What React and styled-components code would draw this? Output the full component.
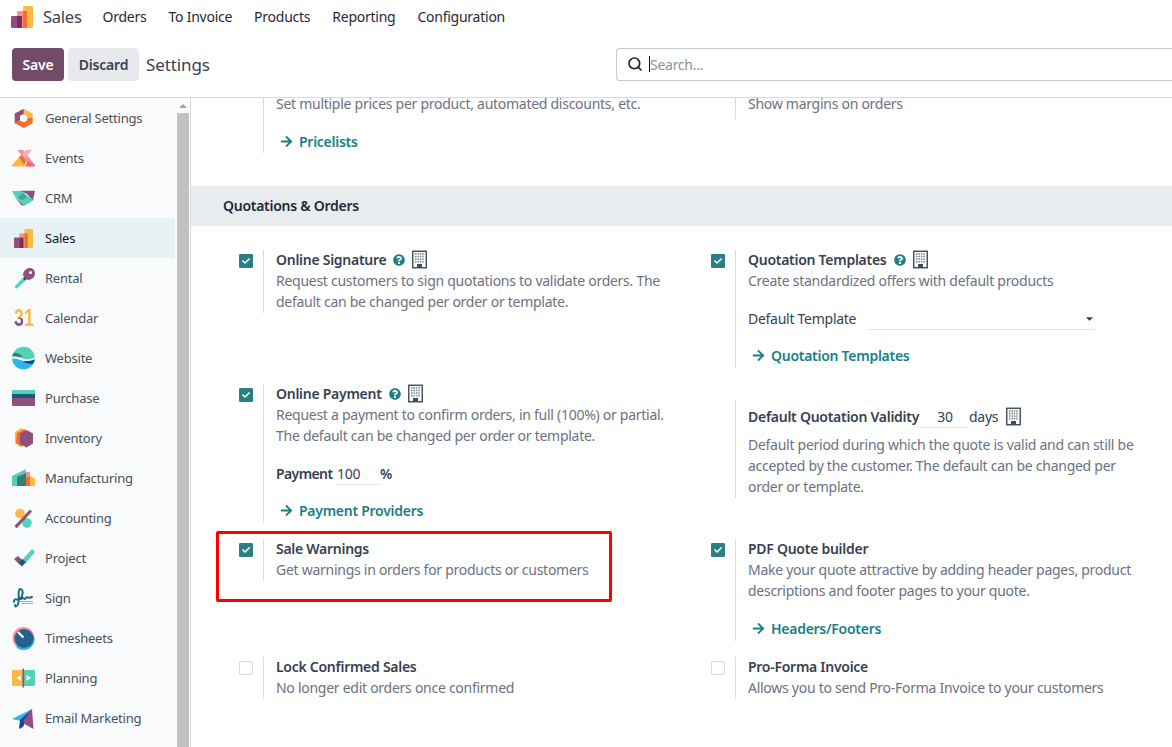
import styled, { createGlobalStyle } from "styled-components";
import { FaQuestionCircle, FaArrowRight, FaCheck, FaCaretDown } from "react-icons/fa";
import { FiSearch } from "react-icons/fi";

const GlobalStyle = createGlobalStyle`
  html, body {
    margin: 0;
    height: 100%;
    overflow: hidden;
    background: #fff;
    font-family: "Noto Sans", "Open Sans", sans-serif;
    font-size: 14px;
    line-height: 21px;
    letter-spacing: -0.27px;
    color: #374151;
  }
`;

const Page = styled.div`
  width: 1172px;
  height: 747px;
  display: flex;
  flex-direction: column;
  overflow: hidden;
`;

const NavBar = styled.nav`
  height: 34px;
  flex: none;
  box-sizing: border-box;
  display: flex;
  align-items: center;
  padding: 0 0 1px 11px;
  letter-spacing: -0.25px;
`;

const BrandLogo = styled.svg`
  width: 22px;
  height: 22px;
  flex: none;
`;

const BrandName = styled.span`
  font-size: 16.5px;
  color: #374151;
  margin-left: 10px;
  margin-right: 21px;
`;

const NavItem = styled.span`
  color: #1f2937;
  margin-right: 22px;
`;

const ControlPanel = styled.div`
  height: 64px;
  flex: none;
  display: flex;
  align-items: flex-start;
  padding: 14px 0 0 12px;
  box-sizing: border-box;
  border-bottom: 1px solid #d8dadd;
`;

const Button = styled.button`
  height: 33px;
  width: ${(p) => p.$width}px;
  margin-right: 4px;
  padding: 0 0 1px;
  border: none;
  border-radius: 4px;
  font: inherit;
  font-weight: 600;
  letter-spacing: -0.2px;
  color: ${(p) => (p.$primary ? "#fff" : "#374151")};
  background: ${(p) => (p.$primary ? "#714b67" : "#e7e9ed")};
`;

const PanelTitle = styled.span`
  font-size: 17px;
  line-height: 33px;
  letter-spacing: -0.1px;
  color: #374151;
  margin-left: 3px;
  width: 470px;
`;

const SearchBox = styled.div`
  flex: 1;
  height: 33px;
  box-sizing: border-box;
  border: 1px solid #c3ccd2;
  border-right: none;
  border-radius: 4px 0 0 4px;
  display: flex;
  align-items: center;
  padding: 0 0 1px 10px;
  color: #1f2937;
`;

const Caret = styled.span`
  width: 1px;
  height: 16px;
  background: #111;
  margin-left: 6px;
`;

const Placeholder = styled.span`
  color: #8a929c;
`;

const Body = styled.div`
  flex: 1;
  min-height: 0;
  display: flex;
`;

const Sidebar = styled.aside`
  width: 175px;
  flex: none;
  background: #f9fafb;
`;

const AppItem = styled.div`
  height: 40px;
  display: flex;
  align-items: center;
  padding-left: 12px;
  gap: 9px;
  font-size: 13px;
  letter-spacing: -0.22px;
  color: ${(p) => (p.$active ? "#111827" : "#495057")};
  background: ${(p) => (p.$active ? "#e6f2f3" : "transparent")};
`;

const ScrollTrack = styled.div`
  width: 15px;
  flex: none;
  display: flex;
  flex-direction: column;
  background: #fcfcfc;
  border-right: 1px solid #d8dadd;
`;

const ScrollArrow = styled.div`
  height: 15px;
  display: flex;
  justify-content: center;
  align-items: center;

  &::before {
    content: "";
    border-left: 4px solid transparent;
    border-right: 4px solid transparent;
    border-bottom: 4px solid #a3a3a3;
  }
`;

const ScrollThumb = styled.div`
  flex: 1;
  margin: 0 1px 0 2px;
  background: #c1c1c1;
`;

const Content = styled.main`
  flex: 1;
  min-width: 0;
  overflow: hidden;
`;

const SectionTitle = styled.h2`
  margin: 33px 0 24px;
  height: 40px;
  padding-left: 32px;
  background: #e9ecef;
  font-size: 14px;
  font-weight: 600;
  line-height: 40px;
  color: #1f2937;
`;

const Grid = styled.div`
  display: grid;
  grid-template-columns: 472px 472px;
  align-items: start;
  row-gap: 16px;
  margin-left: 36px;
`;

const Setting = styled.div`
  position: relative;
  display: grid;
  grid-template-columns: 36px 1fr;
  margin-top: ${(p) => p.$offset || 0}px;
`;

const CheckArea = styled.div`
  padding: 4px 0 0 12px;
`;

const CheckBox = styled.span`
  width: 14px;
  height: 14px;
  box-sizing: border-box;
  display: flex;
  align-items: center;
  justify-content: center;
  border-radius: 1px;
  border: 1px solid ${(p) => (p.$on ? "#2a7f83" : "#d8dadd")};
  background: ${(p) => (p.$on ? "#2a7f83" : "#fff")};
  color: #fff;
  font-size: 8px;
`;

const Pane = styled.div`
  display: flow-root;
  border-left: 1px solid #d8dadd;
  padding-left: 12px;
  padding-bottom: ${(p) => p.$bottom || 0}px;
  min-height: 21px;
`;

/* text sits a pixel higher against the divider than the line box gives */
const PaneBody = styled.div`
  margin: -1px 0 1px;
`;

const TitleRow = styled.div`
  display: flex;
  align-items: center;
  height: 21px;
`;

const Title = styled.span`
  font-weight: 600;
  color: #374151;
  white-space: nowrap;
`;

const HelpIcon = styled(FaQuestionCircle)`
  color: #1f7f85;
  font-size: 12px;
  margin-left: 7px;
`;

const Description = styled.div`
  color: #6b7280;
  white-space: nowrap;
`;

/* first row is scrolled, only the tail of its text still shows */
const ScrolledDescription = styled(Description)`
  line-height: 12px;
  padding-bottom: 5px;
`;

const FieldRow = styled.div`
  display: flex;
  align-items: center;
  height: 23px;
  margin-top: ${(p) => p.$top || 0}px;
  white-space: nowrap;
`;

const ValidityRow = styled(FieldRow)`
  margin-top: 6px;
  margin-bottom: 6px;
`;

const FieldLabel = styled.span`
  color: #374151;
  width: ${(p) => (p.$width ? `${p.$width}px` : "auto")};
  font-weight: ${(p) => (p.$bold ? 600 : 400)};
`;

const PaymentLabel = styled(FieldLabel)`
  letter-spacing: -0.6px;
`;

const Input = styled.span`
  box-sizing: border-box;
  height: 23px;
  width: ${(p) => p.$width}px;
  padding-left: ${(p) => p.$pad || 0}px;
  border-bottom: 1px solid #e2e5e9;
  display: flex;
  align-items: center;
  justify-content: ${(p) => (p.$center ? "center" : "space-between")};
  color: #374151;
`;

const SelectCaret = styled(FaCaretDown)`
  font-size: 11px;
  color: #374151;
`;

const LinkRow = styled.a`
  display: flex;
  align-items: center;
  height: 21px;
  margin-top: ${(p) => p.$top || 16}px;
  margin-left: 4px;
  gap: 6px;
  font-weight: 600;
  color: #1a7f85;
`;

const Highlight = styled.div`
  position: absolute;
  top: -8px;
  left: -11px;
  width: 396px;
  height: 71px;
  box-sizing: border-box;
  border: 3px solid #f00;
  border-radius: 2px;
  pointer-events: none;
`;

const BuildingSvg = styled.svg`
  width: 15px;
  height: 19px;
  margin-left: ${(p) => p.$left || 7}px;
  flex: none;
`;

function Building({ left }) {
  const cells = [];
  for (let r = 0; r < 4; r++) {
    for (let c = 0; c < 4; c++) {
      cells.push(<rect key={`${r}-${c}`} x={3 + c * 2.4} y={2.6 + r * 2.6} width="1.5" height="1.6" fill="#7b8794" />);
    }
  }
  return (
    <BuildingSvg $left={left} viewBox="0 0 15 18">
      <rect x="0.75" y="0.75" width="13.5" height="16.5" fill="#fff" stroke="#3f4b5b" strokeWidth="1.4" />
      {cells}
      <rect x="5" y="13.5" width="5" height="3.5" fill="#3f4b5b" />
    </BuildingSvg>
  );
}

const Icon = styled.svg`
  width: 24px;
  height: 24px;
  flex: none;
`;

const CalendarLogo = styled.span`
  width: 24px;
  height: 24px;
  flex: none;
  box-sizing: border-box;
  padding-left: 2px;
  display: flex;
  font-family: "Liberation Sans", sans-serif;
  font-size: 24px;
  font-weight: 700;
  line-height: 24px;
  letter-spacing: 0;
  transform: scaleX(0.74);
  transform-origin: 2px 0;
`;

const CalendarThree = styled.span`
  color: transparent;
  background: linear-gradient(#fbb945 46%, #8f4f7f 54%);
  -webkit-background-clip: text;
  background-clip: text;
`;

const CalendarOne = styled.span`
  color: #fbb945;
`;

const salesBars = (
  <>
    <rect x="2" y="11.6" width="9.5" height="10.4" rx="1" fill="#8f4f7f" />
    <rect x="7.2" y="7.3" width="8.6" height="14.7" rx="1" fill="#fa8f9c" />
    <rect x="7.2" y="11.6" width="4.3" height="10.4" fill="#7c2f55" />
    <rect x="12.4" y="3" width="8.6" height="19" rx="1" fill="#fbb945" />
    <rect x="12.4" y="7.3" width="3.4" height="14.7" fill="#f26e2e" />
  </>
);

const icons = {
  settings: (
    <>
      <path d="M11.7 2.7 20.7 7.6V12H15L11.7 8.5V2.7Z" fill="#fbb945" />
      <path d="M11.7 2.7 2.7 7.6V17.2L8 14V10L11.7 8.5Z" fill="#8f4f7f" />
      <path d="M2.7 17.2 11.7 22 20.7 17.2V12H15.5L14 15.5H9.5L8 14Z" fill="#f26e2e" />
      <circle cx="11.7" cy="12.2" r="3.6" fill="#fff" />
    </>
  ),
  events: (
    <>
      <path d="M5.5 4H11L23 19 18 20.5Z" fill="#fa8f9c" />
      <path d="M20 4H14L10 9 13 12Z" fill="#fbaeb6" />
      <path d="M0 19 9 9 14 17 12 20.5H2C1 20.5 0 20 0 19Z" fill="#fbb945" />
      <path d="M7 11 10 9 14 15 12 19Z" fill="#f26e2e" />
      <path d="M13 20.5 16 15 23 19C23 20 22 20.5 21 20.5Z" fill="#f8606f" />
    </>
  ),
  crm: (
    <>
      <path d="M0 5H9L22 14 12 20 5 14Z" fill="#55d1b8" />
      <path d="M8 4.7H23L21 14 15 8Z" fill="#8f4f7f" />
      <path d="M5 13 12 20 9 19Z" fill="#8f4f7f" />
      <path d="M6 11 11 7 15 11 10 14.5Z" fill="#3aa99b" />
    </>
  ),
  sales: salesBars,
  rental: (
    <>
      <path d="M3 20 12 11 14.5 13.5 5 22.5C4 23 2.5 21.5 3 20Z" fill="#55d1b8" />
      <path d="M11 9.5C11 4 15 2 18 2 21 2 23 4.5 23 7.5 23 11 20 14 15.5 14Z" fill="#8f4f7f" />
      <path d="M11 12.5 12.8 10.7 15 12.8 13 14.5Z" fill="#1d5a7a" />
      <circle cx="18.5" cy="6.5" r="1.5" fill="#fff" />
    </>
  ),
  website: (
    <>
      <circle cx="11.5" cy="12" r="11.2" fill="#55d1b8" />
      <path d="M0.3 12.5C4 11 8 14 12 14.5 16 15 20 14 22.7 13 22.2 19 17.5 23.2 11.5 23.2 5 23.2 0.3 18.5 0.3 12.5Z" fill="#2bb6f0" />
      <path d="M1 7.5C4 6.2 8 8 11 10.5 7 11 3.5 11 0.4 10.5Z" fill="#2f7f73" />
      <path d="M0.3 11C4 9.5 8 12 12 13 16 14 20 13 22.7 11.5V13.2C20 15 16 15.5 12 15 8 14 4 12 0.3 12.8Z" fill="#fff" />
      <path d="M11 15C15 15.5 19 15 22.6 13.5 22.4 15 22 16.2 21.5 17.3 17 18.5 14 17.5 11 15Z" fill="#1d3f9a" />
    </>
  ),
  purchase: (
    <>
      <rect x="0" y="4" width="23" height="4" fill="#55d1b8" />
      <rect x="0" y="8" width="23" height="4" fill="#1d5a7a" />
      <path d="M0 12H23V19C23 19.6 22.6 20 22 20H1C0.4 20 0 19.6 0 19Z" fill="#8f4f7f" />
    </>
  ),
  inventory: (
    <>
      <path d="M9 2 17 6V17L9 21 3 17V6Z" fill="#fbb945" />
      <path d="M5 7 13 3V20L8 20 4 17Z" fill="#f26e2e" />
      <path d="M14.5 4 21 7.5V17.5L14.5 21.5 8 17.5V7.5Z" fill="#8f4f7f" />
    </>
  ),
  manufacturing: (
    <>
      <path d="M0 10 14 3V20H1C0.4 20 0 19.6 0 19Z" fill="#55d1b8" />
      <path d="M5 11 14 7V20H5Z" fill="#2f7f73" />
      <rect x="14" y="6" width="4" height="14" fill="#fa8f9c" />
      <rect x="14" y="11" width="4" height="9" fill="#f26e2e" />
      <path d="M18 10 23 12.5V19C23 19.6 22.6 20 22 20H18Z" fill="#fbb945" />
    </>
  ),
  accounting: (
    <>
      <circle cx="8" cy="7.5" r="4.8" fill="#fbb945" />
      <circle cx="15" cy="17" r="4.8" fill="#55d1b8" />
      <path d="M2.5 20 18 3.5 20 5.5 4.5 22.5Z" fill="#8f4f7f" />
    </>
  ),
  project: (
    <>
      <path d="M9 15 20 3 23 6 13 18 Z" fill="#55d1b8" />
      <path d="M2 13 6 10 10 14 6 17 Z" fill="#8f4f7f" />
      <path d="M6 17 10 13 14 16 10 20.5Z" fill="#1d5a7a" />
    </>
  ),
  sign: (
    <>
      <path d="M2 16C2 11 5 15 8 13 11 10 12 3 8 3 5 4 8 14 6 18 5 21 3 21 3 19M9 13C12 10 12 15 14 12 15 10 16 13 20 11" fill="none" stroke="#1d6a80" strokeWidth="2" strokeLinecap="round" />
      <path d="M8 15.5H21M10 17.5H21" stroke="#5cc4f0" strokeWidth="1.2" />
    </>
  ),
  timesheets: (
    <>
      <circle cx="11.5" cy="12" r="11" fill="#fa8f9c" />
      <path d="M4 21A11 11 0 0 0 22.5 12 L20 10Z" fill="#2bb6f0" />
      <circle cx="12" cy="12.5" r="9.5" fill="#24618e" />
      <path d="M6 6 11.5 11.5" stroke="#fff" strokeWidth="2.2" />
    </>
  ),
  planning: (
    <>
      <path d="M1 4H11V20H1C0.4 20 0 19.6 0 19V5C0 4.4 0.4 4 1 4Z" fill="#fbb945" />
      <path d="M12 4H22C22.6 4 23 4.4 23 5V19C23 19.6 22.6 20 22 20H12Z" fill="#55d1b8" />
      <path d="M9 9V15L4.5 12Z" fill="#fff" />
      <path d="M14.5 9V15L19 12Z" fill="#fff" />
      <rect x="10.5" y="2.5" width="1.6" height="19" fill="#8f4f7f" />
    </>
  ),
  email: (
    <>
      <path d="M0 13 20 3 9 15Z" fill="#2bb6f0" />
      <path d="M8 14 20 3 11 21 7 23Z" fill="#1d3f9a" />
      <path d="M20 3 21.5 23 14 19 11 15Z" fill="#8f4f7f" />
    </>
  ),
};

function AppIcon({ name }) {
  if (name === "calendar") {
    return (
      <CalendarLogo>
        <CalendarThree>3</CalendarThree>
        <CalendarOne>1</CalendarOne>
      </CalendarLogo>
    );
  }
  return <Icon viewBox="0 0 24 24">{icons[name]}</Icon>;
}

const apps = [
  ["settings", "General Settings"],
  ["events", "Events"],
  ["crm", "CRM"],
  ["sales", "Sales"],
  ["rental", "Rental"],
  ["calendar", "Calendar"],
  ["website", "Website"],
  ["purchase", "Purchase"],
  ["inventory", "Inventory"],
  ["manufacturing", "Manufacturing"],
  ["accounting", "Accounting"],
  ["project", "Project"],
  ["sign", "Sign"],
  ["timesheets", "Timesheets"],
  ["planning", "Planning"],
  ["email", "Email Marketing"],
];

function Check({ on }) {
  return (
    <CheckArea>
      <CheckBox $on={on}>{on && <FaCheck />}</CheckBox>
    </CheckArea>
  );
}

function ArrowLink({ children, top }) {
  return (
    <LinkRow $top={top}>
      <FaArrowRight size={13} />
      {children}
    </LinkRow>
  );
}

function Option({ on, noCheck, bottom, children }) {
  return (
    <>
      {noCheck ? <div /> : <Check on={on} />}
      <Pane $bottom={bottom}>
        <PaneBody>{children}</PaneBody>
      </Pane>
    </>
  );
}

export default function App() {
  return (
    <Page>
      <GlobalStyle />
      <NavBar>
        <BrandLogo viewBox="2 3 19 19">{salesBars}</BrandLogo>
        <BrandName>Sales</BrandName>
        <NavItem>Orders</NavItem>
        <NavItem>To Invoice</NavItem>
        <NavItem>Products</NavItem>
        <NavItem>Reporting</NavItem>
        <NavItem>Configuration</NavItem>
      </NavBar>
      <ControlPanel>
        <Button $primary $width={52}>Save</Button>
        <Button $width={71}>Discard</Button>
        <PanelTitle>Settings</PanelTitle>
        <SearchBox>
          <FiSearch size={16} strokeWidth={2.6} />
          <Caret />
          <Placeholder>Search...</Placeholder>
        </SearchBox>
      </ControlPanel>
      <Body>
        <Sidebar>
          {apps.map(([id, label]) => (
            <AppItem key={id} $active={id === "sales"}>
              <AppIcon name={id} />
              {label}
            </AppItem>
          ))}
        </Sidebar>
        <ScrollTrack>
          <ScrollArrow />
          <ScrollThumb />
        </ScrollTrack>
        <Content>
          <Grid>
            <Setting>
              <div />
              <Pane $bottom={1}>
                <ScrolledDescription>Set multiple prices per product, automated discounts, etc.</ScrolledDescription>
                <ArrowLink>Pricelists</ArrowLink>
              </Pane>
            </Setting>
            <Setting>
              <div />
              <Pane>
                <ScrolledDescription>Show margins on orders</ScrolledDescription>
              </Pane>
            </Setting>
          </Grid>
          <SectionTitle>Quotations &amp; Orders</SectionTitle>
          <Grid>
            <Setting>
              <Option on>
                <TitleRow>
                  <Title>Online Signature</Title>
                  <HelpIcon />
                  <Building />
                </TitleRow>
                <Description>
                  Request customers to sign quotations to validate orders. The
                  <br />
                  default can be changed per order or template.
                </Description>
              </Option>
            </Setting>
            <Setting>
              <Option on bottom={1}>
                <TitleRow>
                  <Title>Quotation Templates</Title>
                  <HelpIcon />
                  <Building />
                </TitleRow>
                <Description>Create standardized offers with default products</Description>
                <FieldRow $top={16}>
                  <FieldLabel $width={119}>Default Template</FieldLabel>
                  <Input $width={228}>
                    <span />
                    <SelectCaret />
                  </Input>
                </FieldRow>
                <ArrowLink top={15}>Quotation Templates</ArrowLink>
              </Option>
            </Setting>
            <Setting>
              <Option on bottom={1}>
                <TitleRow>
                  <Title>Online Payment</Title>
                  <HelpIcon />
                  <Building />
                </TitleRow>
                <Description>
                  Request a payment to confirm orders, in full (100%) or partial.
                  <br />
                  The default can be changed per order or template.
                </Description>
                <FieldRow $top={16}>
                  <PaymentLabel $bold $width={60}>Payment</PaymentLabel>
                  <Input $width={44} $pad={1}>100</Input>
                  <FieldLabel $bold>%</FieldLabel>
                </FieldRow>
                <ArrowLink top={15}>Payment Providers</ArrowLink>
              </Option>
            </Setting>
            <Setting $offset={16}>
              <Option noCheck>
                <ValidityRow>
                  <FieldLabel $bold $width={173}>Default Quotation Validity</FieldLabel>
                  <Input $width={48} $center>30</Input>
                  <FieldLabel>days</FieldLabel>
                  <Building left={8} />
                </ValidityRow>
                <Description>
                  Default period during which the quote is valid and can still be
                  <br />
                  accepted by the customer. The default can be changed per
                  <br />
                  order or template.
                </Description>
              </Option>
            </Setting>
            <Setting>
              <Highlight />
              <Option on>
                <TitleRow>
                  <Title>Sale Warnings</Title>
                </TitleRow>
                <Description>Get warnings in orders for products or customers</Description>
              </Option>
            </Setting>
            <Setting>
              <Option on bottom={1}>
                <TitleRow>
                  <Title>PDF Quote builder</Title>
                </TitleRow>
                <Description>
                  Make your quote attractive by adding header pages, product
                  <br />
                  descriptions and footer pages to your quote.
                </Description>
                <ArrowLink top={17}>Headers/Footers</ArrowLink>
              </Option>
            </Setting>
            <Setting>
              <Option>
                <TitleRow>
                  <Title>Lock Confirmed Sales</Title>
                </TitleRow>
                <Description>No longer edit orders once confirmed</Description>
              </Option>
            </Setting>
            <Setting>
              <Option>
                <TitleRow>
                  <Title>Pro-Forma Invoice</Title>
                </TitleRow>
                <Description>Allows you to send Pro-Forma Invoice to your customers</Description>
              </Option>
            </Setting>
          </Grid>
        </Content>
      </Body>
    </Page>
  );
}
